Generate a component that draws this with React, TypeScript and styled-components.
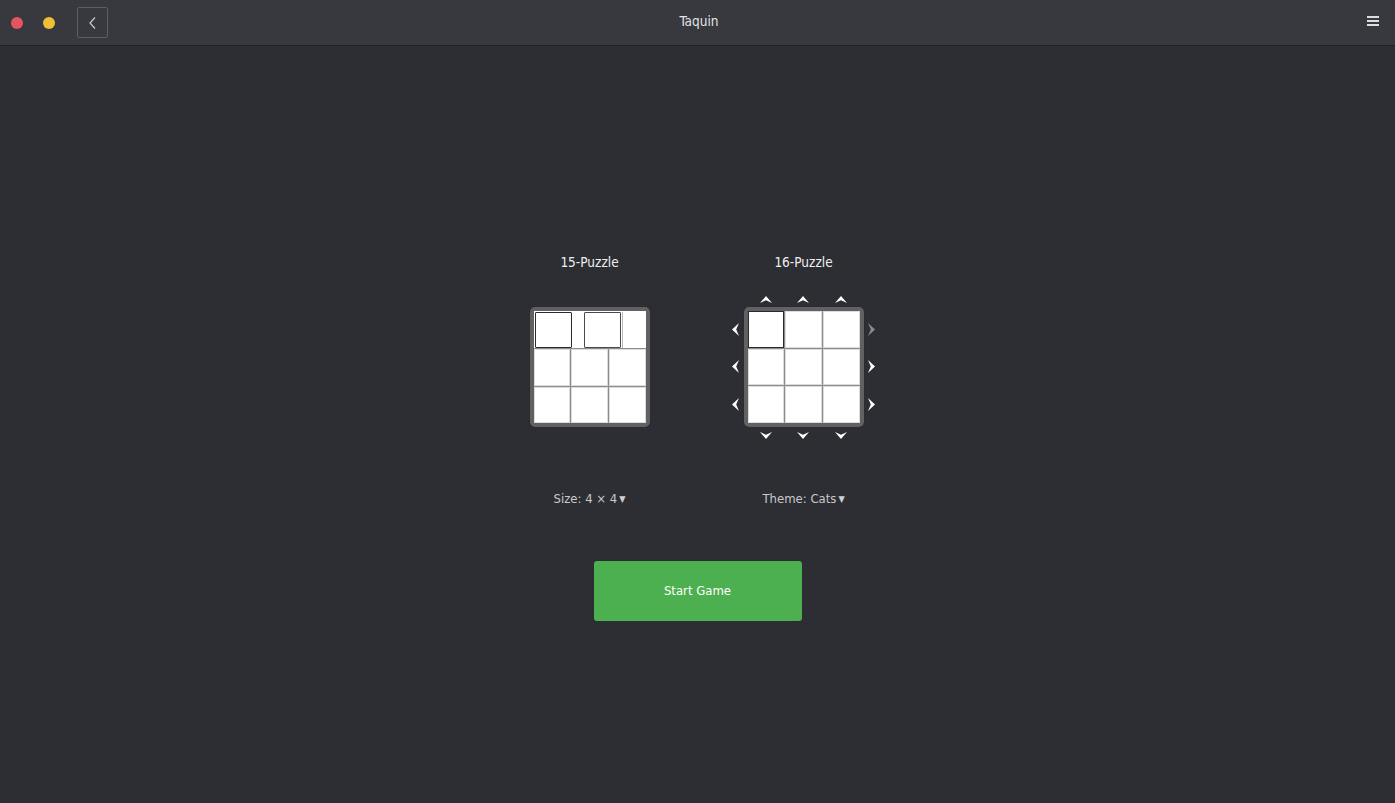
import React from 'react';
import styled, { createGlobalStyle } from 'styled-components';

const GlobalStyle = createGlobalStyle`
  html, body {
    margin: 0;
    padding: 0;
    height: 100%;
    background-color: #2d2e33;
  }
  body {
    font-family: 'DejaVu Sans Condensed', 'Liberation Sans Narrow', Roboto, sans-serif;
    font-stretch: condensed;
  }
`;

const Window = styled.div`
  display: flex;
  flex-direction: column;
  height: 803px;
  background-color: #2d2e33;
`;

const HeaderBar = styled.header`
  display: grid;
  grid-template-columns: 1fr auto 1fr;
  align-items: center;
  height: 45px;
  background-color: #38393e;
  border-bottom: 1px solid #222327;
  padding: 0 16px 0 11px;
`;

const HeaderLeft = styled.div`
  display: flex;
  align-items: center;
`;

const Dot = styled.span<{ $color: string }>`
  width: 12px;
  height: 12px;
  border-radius: 50%;
  background-color: ${(p) => p.$color};
  margin-right: 20px;
`;

const BackButton = styled.button`
  display: flex;
  align-items: center;
  justify-content: center;
  width: 31px;
  height: 31px;
  margin-left: 2px;
  padding: 0;
  background: transparent;
  border: 1px solid #5d5e63;
  border-radius: 2px;
  color: #c9cacd;
`;

const Title = styled.div`
  color: #e4e4e6;
  font-size: 13.5px;
  padding: 0 0 4px 8px;
`;

const HeaderRight = styled.div`
  display: flex;
  justify-content: flex-end;
`;

const Hamburger = styled.div`
  display: flex;
  flex-direction: column;
  gap: 2px;
  padding-bottom: 4px;

  span {
    display: block;
    width: 12px;
    height: 2px;
    background-color: #dedee0;
  }
`;

const Main = styled.main`
  flex: 1;
  display: flex;
  flex-direction: column;
  align-items: center;
  padding-top: 206px;
`;

const Choices = styled.div`
  display: grid;
  grid-template-columns: 200px 200px;
  column-gap: 14px;
  margin-left: -2px;
`;

const Choice = styled.div`
  display: flex;
  flex-direction: column;
  align-items: center;
`;

const ChoiceTitle = styled.div`
  height: 20px;
  line-height: 20px;
  font-size: 13.5px;
  color: #ededee;
  margin-bottom: 19px;
`;

const BoardArea = styled.div`
  display: grid;
  grid-template-columns: 16px 120px 16px;
  grid-template-rows: 16px 120px 16px;
`;

const Board = styled.div`
  grid-column: 2;
  grid-row: 2;
  box-sizing: border-box;
  width: 120px;
  height: 120px;
  border: 4px solid #616161;
  border-radius: 5px;
  background-color: #8d8d8d;
  display: grid;
  grid-template-columns: repeat(3, 1fr);
  grid-template-rows: repeat(3, 1fr);
  gap: 1px;
  box-shadow: 0 0 1px #1d1e21;
`;

const Cell = styled.div<{ $selected?: boolean }>`
  background-color: #ffffff;
  box-sizing: border-box;
  border: 1px solid ${(p) => (p.$selected ? '#2a2a2a' : '#dcdcdc')};
`;

const SlidingRow = styled.div`
  grid-column: 1 / -1;
  display: flex;
  background-color: #ffffff;
  padding: 1px 0 0 1px;
`;

const SlidingTile = styled.div<{ $shift?: number; $dark?: boolean }>`
  box-sizing: border-box;
  width: 37px;
  height: 36px;
  margin-left: ${(p) => p.$shift ?? 0}px;
  border: 1px solid ${(p) => (p.$dark ? '#2a2a2a' : '#4a4a4a')};
  border-radius: 1px;
`;

const SlidingRest = styled.div`
  flex: 1;
  border-left: 1px solid #b9b9b9;
  margin-left: 1px;
`;

const ArrowStrip = styled.div<{ $col: number; $row: number; $vertical?: boolean }>`
  grid-column: ${(p) => p.$col};
  grid-row: ${(p) => p.$row};
  display: grid;
  padding: 4px;
  gap: 1px;
  ${(p) =>
    p.$vertical
      ? 'grid-template-rows: repeat(3, 1fr); padding-left: 0; padding-right: 0;'
      : 'grid-template-columns: repeat(3, 1fr); padding-top: 0; padding-bottom: 0;'}
  place-items: center;
`;

const ArrowIcon = styled.svg<{ $dim?: boolean }>`
  display: block;
  fill: ${(p) => (p.$dim ? '#8a8b8f' : '#ffffff')};
`;

const Dropdown = styled.div`
  margin-top: 46px;
  height: 20px;
  line-height: 20px;
  font-size: 13px;
  color: #c7c8cb;
  display: flex;
  align-items: center;
  gap: 2px;
`;

const Caret = styled.span`
  font-size: 9px;
  color: #d0d1d3;
`;

const StartButton = styled.button`
  margin-top: 52px;
  width: 208px;
  height: 60px;
  padding-bottom: 3px;
  border: none;
  border-radius: 3px;
  background-color: #4caf50;
  color: #ffffff;
  font-family: inherit;
  font-stretch: condensed;
  font-size: 13px;
  cursor: pointer;
`;

type Dir = 'up' | 'down' | 'left' | 'right';

const arrowShapes: Record<Dir, string> = {
  up: '0,7 6,0 12,7 6,4.2',
  down: '0,0 6,7 12,0 6,2.8',
  left: '7,0 0,6.5 7,13 4.2,6.5',
  right: '0,0 7,6.5 0,13 2.8,6.5',
};

const Arrow: React.FC<{ dir: Dir; dim?: boolean }> = ({ dir, dim }) => {
  const vertical = dir === 'up' || dir === 'down';
  const w = vertical ? 12 : 7;
  const h = vertical ? 7 : 13;
  return (
    <ArrowIcon width={w} height={h} viewBox={`0 0 ${w} ${h}`} $dim={dim}>
      <polygon points={arrowShapes[dir]} />
    </ArrowIcon>
  );
};

const threes = [0, 1, 2];

const App: React.FC = () => {
  return (
    <>
      <GlobalStyle />
      <Window>
        <HeaderBar>
          <HeaderLeft>
            <Dot $color="#e5545f" />
            <Dot $color="#f0bf35" />
            <BackButton aria-label="Back">
              <svg width="10" height="14" viewBox="0 0 10 14" fill="none" stroke="currentColor" strokeWidth="1.2">
                <path d="M7 1.5 L2 7 L7 12.5" />
              </svg>
            </BackButton>
          </HeaderLeft>
          <Title>Taquin</Title>
          <HeaderRight>
            <Hamburger>
              <span />
              <span />
              <span />
            </Hamburger>
          </HeaderRight>
        </HeaderBar>

        <Main>
          <Choices>
            <Choice>
              <ChoiceTitle>15-Puzzle</ChoiceTitle>
              <BoardArea>
                <Board>
                  <SlidingRow>
                    <SlidingTile $dark />
                    <SlidingTile $shift={12} />
                    <SlidingRest />
                  </SlidingRow>
                  {[0, 1, 2, 3, 4, 5].map((i) => (
                    <Cell key={i} />
                  ))}
                </Board>
              </BoardArea>
              <Dropdown>
                Size: 4 × 4 <Caret>▼</Caret>
              </Dropdown>
            </Choice>

            <Choice>
              <ChoiceTitle>16-Puzzle</ChoiceTitle>
              <BoardArea>
                <ArrowStrip $col={2} $row={1}>
                  {threes.map((i) => (
                    <Arrow key={i} dir="up" />
                  ))}
                </ArrowStrip>
                <ArrowStrip $col={1} $row={2} $vertical>
                  {threes.map((i) => (
                    <Arrow key={i} dir="left" />
                  ))}
                </ArrowStrip>
                <Board>
                  {[0, 1, 2, 3, 4, 5, 6, 7, 8].map((i) => (
                    <Cell key={i} $selected={i === 0} />
                  ))}
                </Board>
                <ArrowStrip $col={3} $row={2} $vertical>
                  {threes.map((i) => (
                    <Arrow key={i} dir="right" dim={i === 0} />
                  ))}
                </ArrowStrip>
                <ArrowStrip $col={2} $row={3}>
                  {threes.map((i) => (
                    <Arrow key={i} dir="down" />
                  ))}
                </ArrowStrip>
              </BoardArea>
              <Dropdown>
                Theme: Cats<Caret>▼</Caret>
              </Dropdown>
            </Choice>
          </Choices>

          <StartButton>Start Game</StartButton>
        </Main>
      </Window>
    </>
  );
};

export default App;
